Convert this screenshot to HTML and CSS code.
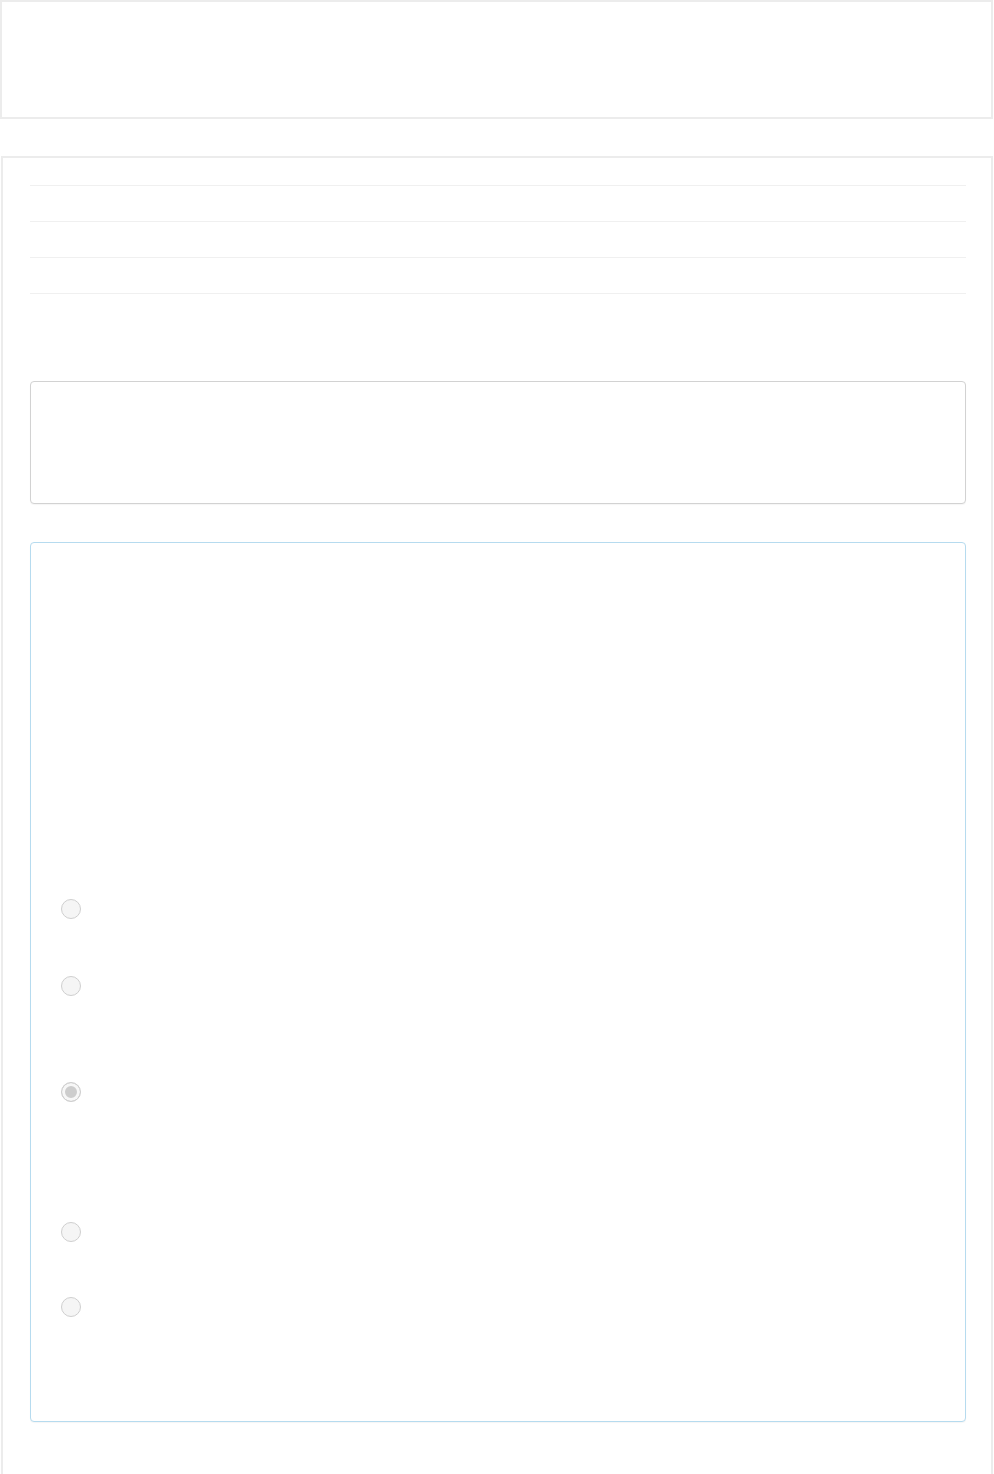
FILE: index.html
```html
<!DOCTYPE html>
<html lang="en">
<head>
    <meta charset="UTF-8">
    <meta name="viewport" content="width=device-width, initial-scale=1.0">
    <title>Quiz</title>
    <link rel="stylesheet" href="styles.css">
</head>
<body>
    <div class="top-bar"></div>

    <div class="card">
        <ul class="info-list">
            <li></li>
            <li></li>
            <li></li>
        </ul>

        <div class="panel panel-default"></div>

        <div class="panel panel-info">
            <form class="options">
                <label class="option option-a"><input type="radio" name="answer"></label>
                <label class="option option-b"><input type="radio" name="answer"></label>
                <label class="option option-c"><input type="radio" name="answer" checked></label>
                <label class="option option-d"><input type="radio" name="answer"></label>
                <label class="option option-e"><input type="radio" name="answer"></label>
            </form>
        </div>
    </div>
</body>
</html>
```

FILE: styles.css
```css
* {
    margin: 0;
    padding: 0;
    box-sizing: border-box;
    font-family: "Liberation Sans", Arial, sans-serif;
}

body {
    background-color: #fff;
    width: 994px;
}

.top-bar {
    width: 993px;
    height: 119px;
    border: 2px solid #ececec;
}

.card {
    width: 992px;
    margin: 37px 0 0 1px;
    min-height: 1340px;
    padding: 27px 25px 0 27px;
    border: 2px solid #ececec;
    border-bottom: none;
}

.info-list {
    list-style: none;
    border-bottom: 1px solid #f0f0f0;
}

.info-list li {
    height: 36px;
    border-top: 1px solid #f0f0f0;
}

.panel {
    border-radius: 4px;
    background-color: #fff;
}

.panel-default {
    margin-top: 87px;
    height: 123px;
    border: 1px solid #d2d2d2;
    box-shadow: 0 1px 1px rgba(0, 0, 0, 0.04);
}

.panel-info {
    margin-top: 38px;
    height: 880px;
    border: 1px solid #b6dbef;
    box-shadow: 0 1px 1px rgba(0, 0, 0, 0.04);
}

.options {
    padding: 356px 0 0 30px;
}

.option {
    display: block;
    height: 77px;
}

.option-b { height: 106px; }
.option-c { height: 140px; }
.option-d { height: 75px; }

.option input[type="radio"] {
    appearance: none;
    display: block;
    width: 20px;
    height: 20px;
    border-radius: 50%;
    border: 1px solid #cfcfcf;
    background-color: #f5f5f5;
}

.option input[type="radio"]:checked {
    background-color: #cdcdcd;
    box-shadow: inset 0 0 0 3px #f7f7f7;
}
```
